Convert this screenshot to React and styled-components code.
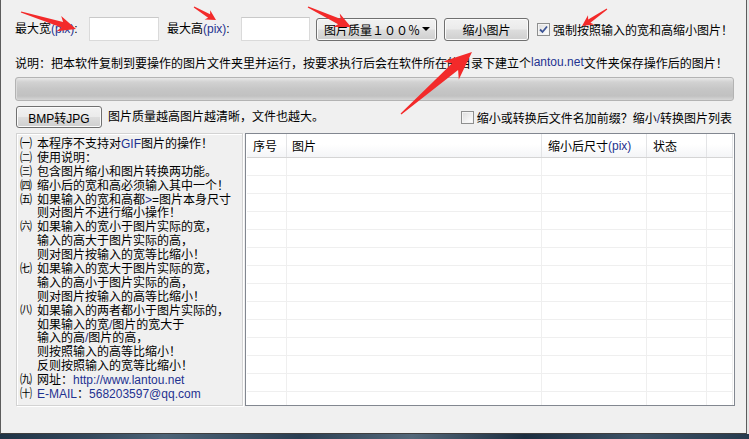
import React from 'react';
import styled, { createGlobalStyle } from 'styled-components';

const GlobalStyle = createGlobalStyle`
  html, body { margin: 0; padding: 0; }
  body {
    width: 749px;
    height: 439px;
    overflow: hidden;
    background: #e6e6e6;
    font-family: Tahoma, "Liberation Sans", "Noto Sans CJK SC", sans-serif;
    font-size: 12px;
    color: #000;
  }
`;

const Screen = styled.div`
  position: relative;
  width: 749px;
  height: 439px;
  display: flex;
  flex-direction: column;
`;

const Window = styled.div`
  width: 747px;
  height: 434px;
  box-sizing: border-box;
  background: #f0f0f0;
  border-left: 1px solid #5c5c5c;
  border-right: 1px solid #5c5c5c;
  border-bottom: 1px solid #3f3f3f;
  padding: 17px 0 0 14px;
  display: flex;
  flex-direction: column;
`;

const Taskbar = styled.div`
  flex: 1;
  background: linear-gradient(90deg, #1f3346 0%, #34495d 12%, #4d6478 22%, #2a3e52 40%, #54687a 55%, #1c2e40 70%, #3d5266 85%, #263a4e 100%);
`;

const Row = styled.div`
  display: flex;
  align-items: center;
  height: ${p => p.h}px;
  margin-top: ${p => p.mt || 0}px;
  width: ${p => (p.w ? `${p.w}px` : 'auto')};
  white-space: nowrap;
`;

const Label = styled.span`
  display: inline-block;
  width: ${p => (p.w ? `${p.w}px` : 'auto')};
  margin-left: ${p => p.ml || 0}px;
  line-height: 14px;
`;

const Latin = styled.span`
  color: #1f3290;
`;

const TextBox = styled.input`
  width: ${p => p.w}px;
  height: 24px;
  box-sizing: border-box;
  border: 1px solid #dadada;
  border-top-color: #c9c9c9;
  background: #fff;
  padding: 0 3px;
  margin: 0;
  outline: none;
`;

const Button = styled.button`
  width: ${p => p.w}px;
  height: ${p => p.h}px;
  margin: 0 0 0 ${p => p.ml || 0}px;
  padding: 0;
  box-sizing: border-box;
  border: 1px solid #707070;
  border-radius: 3px;
  background: linear-gradient(#f2f2f2 0%, #ebebeb 48%, #dddddd 52%, #cfcfcf 100%);
  box-shadow: inset 0 0 0 1px #fbfbfb;
  font-family: inherit;
  font-size: 12px;
  color: #000;
  white-space: nowrap;
`;

const Select = styled(Button)`
  display: flex;
  align-items: center;
  justify-content: space-between;
  padding: 0 6px 0 7px;
`;

const Caret = styled.span`
  width: 0;
  height: 0;
  border-left: 4px solid transparent;
  border-right: 4px solid transparent;
  border-top: 4px solid #000;
`;

const Check = styled.span`
  display: inline-flex;
  align-items: center;
  justify-content: center;
  width: 13px;
  height: 13px;
  box-sizing: border-box;
  margin-left: ${p => p.ml || 0}px;
  margin-right: 3px;
  border: 1px solid #8e8f8f;
  background: linear-gradient(135deg, #dcdcdc, #f6f6f6 70%, #fff);
  box-shadow: inset 0 0 0 1px #f4f4f4;
`;

const Progress = styled.div`
  width: 719px;
  height: 24px;
  box-sizing: border-box;
  border: 1px solid #b3b3b3;
  border-radius: 3px;
  background: linear-gradient(#e8e8e8 0%, #d2d2d2 18%, #c6c6c6 50%, #c1c1c1 82%, #d6d6d6 100%);
  box-shadow: inset 1px 0 0 #dadada;
`;

const Spacer = styled.span`
  flex: 1;
`;

const Body = styled.div`
  display: flex;
  margin-top: 5px;
  height: 273px;
`;

const Notes = styled.div`
  width: 227px;
  margin-left: 1px;
  box-sizing: border-box;
  border: 1px solid #d3d3d3;
  box-shadow: inset 1px 1px 0 #fff, 1px 1px 0 #fff;
  padding: 4px 0 0 3px;
  white-space: nowrap;
  overflow: hidden;
`;

const NoteLine = styled.div`
  display: flex;
  height: 13.9px;
  line-height: 13.9px;
  padding-left: ${p => (p.indent ? 17 : 0)}px;
`;

const Num = styled.span`
  display: inline-block;
  width: 17px;
  flex: none;
`;

const List = styled.div`
  width: 490px;
  margin-left: 2px;
  box-sizing: border-box;
  border: 1px solid #828790;
  background: #fff;
  padding: 0 1px;
  overflow: hidden;
`;

const HeadRow = styled.div`
  display: flex;
  height: 24px;
  box-sizing: border-box;
  border-bottom: 1px solid #d5d5d5;
  background: linear-gradient(#ffffff 0%, #ffffff 45%, #f4f5f7 100%);
`;

const HeadCell = styled.div`
  width: ${p => (p.w ? `${p.w}px` : 'auto')};
  flex: ${p => (p.w ? 'none' : '1')};
  box-sizing: border-box;
  border-right: 1px solid #e3e4e6;
  padding-left: ${p => p.pl || 5}px;
  display: flex;
  align-items: center;
  white-space: nowrap;
`;

const GridRow = styled.div`
  display: flex;
  height: 18px;
`;

const GridCell = styled.div`
  width: ${p => (p.w ? `${p.w}px` : 'auto')};
  flex: ${p => (p.w ? 'none' : '1')};
  box-sizing: border-box;
  border-right: 1px solid #efefef;
  border-bottom: 1px solid #efefef;
`;

const Overlay = styled.svg`
  position: absolute;
  left: 0;
  top: 0;
  pointer-events: none;
`;

const columns = [40, 255, 105, 60, 0];

const notes = [
  { n: '㈠', t: <>本程序不支持对<Latin>GIF</Latin>图片的操作！</> },
  { n: '㈡', t: '使用说明：' },
  { n: '㈢', t: '包含图片缩小和图片转换两功能。' },
  { n: '㈣', t: '缩小后的宽和高必须输入其中一个！' },
  { n: '㈤', t: <>如果输入的宽和高都<Latin>&gt;</Latin>=图片本身尺寸</> },
  { t: '则对图片不进行缩小操作！' },
  { n: '㈥', t: '如果输入的宽小于图片实际的宽，' },
  { t: '输入的高大于图片实际的高，' },
  { t: '则对图片按输入的宽等比缩小！' },
  { n: '㈦', t: '如果输入的宽大于图片实际的宽，' },
  { t: '输入的高小于图片实际的高，' },
  { t: '则对图片按输入的高等比缩小！' },
  { n: '㈧', t: '如果输入的两者都小于图片实际的，' },
  { t: <>如果输入的宽<Latin>/</Latin>图片的宽大于</> },
  { t: <>输入的高<Latin>/</Latin>图片的高，</> },
  { t: '则按照输入的高等比缩小！' },
  { t: '反则按照输入的宽等比缩小！' },
  { n: '㈨', t: <>网址：<Latin>http://www.lantou.net</Latin></> },
  { n: '㈩', t: <><Latin>E-MAIL</Latin>：<Latin>568203597@qq.com</Latin></> },
];

// red annotation arrows: tail, tip, neck width, head width, head length
const arrows = [
  [21, 12, 76, 29, 6, 16, 18],
  [194, 7, 216, 20, 4, 11, 10],
  [308, 7, 351, 27, 6, 15, 16],
  [401, 114, 472, 52, 9, 24, 28],
  [607, 9, 582, 26, 4, 11, 11],
];

function arrowPoints([x1, y1, x2, y2, neck, head, headLen]) {
  const len = Math.hypot(x2 - x1, y2 - y1);
  const dx = (x2 - x1) / len;
  const dy = (y2 - y1) / len;
  const nx = -dy;
  const ny = dx;
  const bx = x2 - dx * headLen;
  const by = y2 - dy * headLen;
  const bx2 = x2 - dx * headLen * 0.8;
  const by2 = y2 - dy * headLen * 0.8;
  const pts = [
    [x1 + nx * 0.6, y1 + ny * 0.6],
    [bx2 + nx * neck / 2, by2 + ny * neck / 2],
    [bx + nx * head / 2, by + ny * head / 2],
    [x2, y2],
    [bx - nx * head / 2, by - ny * head / 2],
    [bx2 - nx * neck / 2, by2 - ny * neck / 2],
    [x1 - nx * 0.6, y1 - ny * 0.6],
  ];
  return pts.map(p => p.map(v => v.toFixed(1)).join(',')).join(' ');
}

const CheckMark = () => (
  <svg width="9" height="9" viewBox="0 0 9 9">
    <path d="M1 4.5 L3.5 7 L8 1.5" fill="none" stroke="#3d5596" strokeWidth="1.8" />
  </svg>
);

export default function App() {
  return (
    <Screen>
      <GlobalStyle />
      <Window>
        <Row h={24}>
          <Label w={74}>最大宽<Latin>(pix)</Latin>:</Label>
          <TextBox w={70} />
          <Label w={74} ml={8}>最大高<Latin>(pix)</Latin>:</Label>
          <TextBox w={69} />
          <Select w={121} h={23} ml={6}>
            <span>图片质量１００％</span>
            <Caret />
          </Select>
          <Button w={85} h={23} ml={7}>缩小图片</Button>
          <Check ml={8}><CheckMark /></Check>
          <span>强制按照输入的宽和高缩小图片！</span>
        </Row>
        <Row h={14} mt={14}>
          说明：把本软件复制到要操作的图片文件夹里并运行，按要求执行后会在软件所在的目录下建立个<Latin>lantou.net</Latin>文件夹保存操作后的图片！
        </Row>
        <Row h={24} mt={8}>
          <Progress />
        </Row>
        <Row h={22} mt={5} w={717}>
          <Button w={86} h={22} ml={1}>BMP转JPG</Button>
          <Label ml={6}>图片质量越高图片越清晰，文件也越大。</Label>
          <Spacer />
          <Check />
          <span>缩小或转换后文件名加前缀？缩小<Latin>/</Latin>转换图片列表</span>
        </Row>
        <Body>
          <Notes>
            {notes.map((line, i) => (
              <NoteLine key={i} indent={!line.n}>
                {line.n && <Num>{line.n}</Num>}
                <span>{line.t}</span>
              </NoteLine>
            ))}
          </Notes>
          <List>
            <HeadRow>
              <HeadCell w={40} pl={6}>序号</HeadCell>
              <HeadCell w={255}>图片</HeadCell>
              <HeadCell w={105} pl={6}>缩小后尺寸<Latin>(pix)</Latin></HeadCell>
              <HeadCell w={60} pl={6}>状态</HeadCell>
              <HeadCell />
            </HeadRow>
            {Array.from({ length: 14 }).map((_, r) => (
              <GridRow key={r}>
                {columns.map((w, c) => (
                  <GridCell key={c} w={w} />
                ))}
              </GridRow>
            ))}
          </List>
        </Body>
      </Window>
      <Taskbar />
      <Overlay width="749" height="439">
        {arrows.map((a, i) => (
          <polygon key={i} points={arrowPoints(a)} fill="#f32a2a" />
        ))}
      </Overlay>
    </Screen>
  );
}
